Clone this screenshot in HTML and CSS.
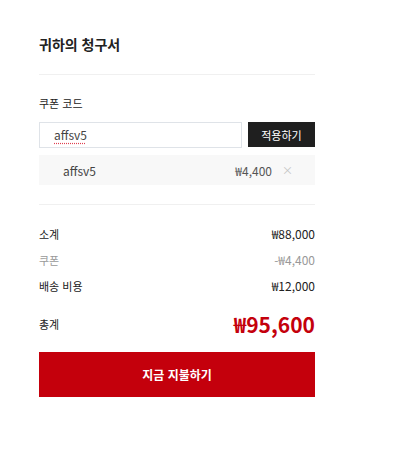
FILE: index.html
```html
<!DOCTYPE html>
<html lang="ko">
<head>
<meta charset="utf-8">
<link rel="stylesheet" href="styles.css">
</head>
<body>
<div class="invoice">
  <h2 class="title">귀하의 청구서</h2>
  <div class="divider"></div>
  <div class="coupon">
    <div class="label">쿠폰 코드</div>
    <div class="coupon-form">
      <div class="input"><span class="typed">affsv5</span></div>
      <button class="apply">적용하기</button>
    </div>
    <div class="applied">
      <span class="code">affsv5</span>
      <span class="amount">₩4,400</span>
      <span class="remove">×</span>
    </div>
  </div>
  <div class="divider"></div>
  <div class="rows">
    <div class="row"><span>소계</span><span>₩88,000</span></div>
    <div class="row muted"><span>쿠폰</span><span>-₩4,400</span></div>
    <div class="row"><span>배송 비용</span><span>₩12,000</span></div>
  </div>
  <div class="total">
    <span class="total-label">총계</span>
    <span class="total-value">₩95,600</span>
  </div>
  <button class="pay">지금 지불하기</button>
</div>
</body>
</html>
```
FILE: styles.css
```css
* { box-sizing: border-box; }
body {
  margin: 0;
  background: #fff;
  font-family: "Noto Sans CJK KR", "Noto Sans", sans-serif;
  color: #222;
}
.invoice {
  width: 276px;
  margin-left: 39px;
  padding-top: 33px;
}
.title {
  margin: 0;
  font-size: 14px;
  font-weight: 700;
  line-height: 22px;
  color: #222;
}
.divider {
  height: 1px;
  background: #f0f0f0;
}
.invoice > .divider:first-of-type { margin-top: 19px; }
.coupon { padding: 20px 0 19px; }
.label {
  font-size: 11px;
  line-height: 16px;
  color: #222;
}
.coupon-form {
  display: flex;
  gap: 6px;
  margin-top: 11px;
}
.input {
  flex: 1;
  height: 26px;
  border: 1px solid #dfe3e8;
  padding-left: 14px;
  font-size: 12px;
  line-height: 24px;
  color: #444;
}
.typed {
  text-decoration: underline dotted #e04050;
  text-underline-offset: 3px;
}
.apply {
  width: 67px;
  height: 25px;
  border: 0;
  background: #1f1f1f;
  color: #fff;
  font-family: inherit;
  font-size: 11px;
  padding: 0;
}
.applied {
  display: flex;
  align-items: center;
  height: 30px;
  margin-top: 7px;
  background: #f8f8f8;
  padding: 0 22px 0 24px;
  font-size: 12px;
  color: #444;
}
.code { flex: 1; }
.amount { color: #555; font-size: 12px; }
.remove { margin-left: 10px; color: #c4c4c4; font-size: 11px; }
.rows { padding-top: 21px; }
.row {
  display: flex;
  justify-content: space-between;
  align-items: baseline;
  font-size: 11px;
  line-height: 16px;
  margin-bottom: 10px;
  color: #222;
}
.row span:last-child { font-size: 12px; }
.row.muted { color: #999; }
.total {
  display: flex;
  justify-content: space-between;
  align-items: center;
  margin-top: 17px;
}
.total-label { font-size: 11px; }
.total-value {
  color: #c4000c;
  font-size: 21px;
  font-weight: 700;
  line-height: 26px;
}
.pay {
  display: block;
  width: 100%;
  height: 45px;
  margin-top: 15px;
  border: 0;
  background: #c4000c;
  color: #fff;
  font-family: inherit;
  font-size: 12px;
  font-weight: 700;
}
```
